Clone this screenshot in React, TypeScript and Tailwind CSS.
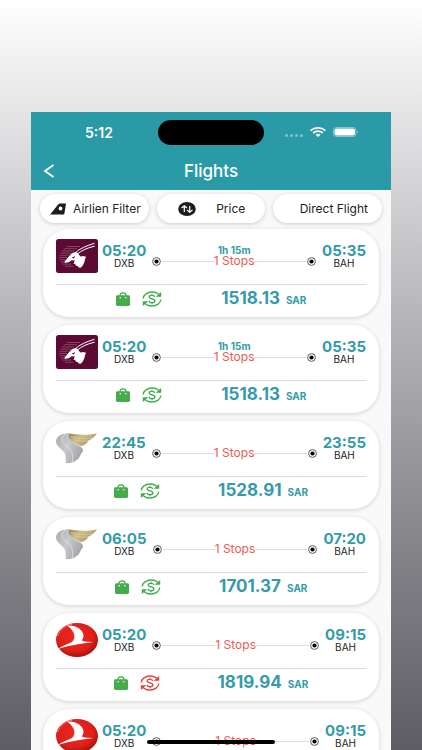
import { useState } from 'react';

type Airline = 'qatar' | 'gulf' | 'turkish';

interface Flight {
    id: number;
    airline: Airline;
    depart: string;
    arrive: string;
    duration?: string;
    price: string;
    refundable: boolean;
}

const flights: Flight[] = [
    { id: 1, airline: 'qatar', depart: '05:20', arrive: '05:35', duration: '1h 15m', price: '1518.13', refundable: true },
    { id: 2, airline: 'qatar', depart: '05:20', arrive: '05:35', duration: '1h 15m', price: '1518.13', refundable: true },
    { id: 3, airline: 'gulf', depart: '22:45', arrive: '23:55', price: '1528.91', refundable: true },
    { id: 4, airline: 'gulf', depart: '06:05', arrive: '07:20', price: '1701.37', refundable: true },
    { id: 5, airline: 'turkish', depart: '05:20', arrive: '09:15', price: '1819.94', refundable: false },
    { id: 6, airline: 'turkish', depart: '05:20', arrive: '09:15', price: '1819.94', refundable: false },
];

function QatarLogo() {
    return (
        <svg viewBox="0 0 42 34" className="h-[34px] w-[42px]" role="img" aria-label="Qatar Airways">
            <rect width="42" height="34" rx="2.5" fill="#5c0a33" />
            <path
                d="M11 7.500h13M8 9.700h13M6 11.900h12M4.500 14.100h11M3.500 16.300h9M3 18.500h8M3.500 20.700h6M4.500 22.900h5M6 25.100h9M9 27.300h8"
                stroke="#8f5473"
                strokeWidth="0.8"
            />
            <path d="M38.500 4.300C31 6.500 23.500 9.500 18.500 14.300M38.700 7.200C32 8.500 25.500 11.500 20.500 15.600" fill="none" stroke="#fff" strokeWidth="1" />
            <path
                d="M20 13.200c-3-.2-4.800 1.400-6.200 3.200-1.800 2.200-4 4.100-5.300 6.300-.3.700.6 1.400 1.400 1.100 2.300-.4 4-1 5.600-2.600l3.300.2-1.300 3.200 2 .6.300 1.500 2 .3.700 1.400 2.200.3 1.700-1.600 1.300-2.300.9-2.500.6-2.700 1-1.600-2.500-.9-2.600.4c-2-.4-2.600-3.800-5.100-4.300z"
                fill="#fff"
            />
            <path d="M15.600 18.700l3.600-1.800-1.400 2.600z" fill="#5c0a33" />
        </svg>
    );
}

function GulfLogo() {
    return (
        <svg viewBox="0 0 42 34" className="h-[34px] w-[42px]" role="img" aria-label="Gulf Air">
            <defs>
                <linearGradient id="gulf-gold" x1="0" y1="0" x2="1" y2="0.6">
                    <stop offset="0" stopColor="#8d7a4d" />
                    <stop offset="0.45" stopColor="#d0bd90" />
                    <stop offset="1" stopColor="#a8935f" />
                </linearGradient>
                <linearGradient id="gulf-silver" x1="0" y1="0" x2="1" y2="0.5">
                    <stop offset="0" stopColor="#a6a8ad" />
                    <stop offset="0.5" stopColor="#c9cace" />
                    <stop offset="1" stopColor="#a5a7ac" />
                </linearGradient>
            </defs>
            <path d="M11.500 2.300C20 3.600 31 4.600 41 2.200c-2 3.400-4.500 5.800-8.500 7.300-1.500 3.300-4 4.700-7.500 5.500L12.500 9z" fill="url(#gulf-gold)" />
            <path d="M15 5.500c7 2.300 16 3 23 .9M17 8.500c5 1.800 10 2.200 15 1.300" fill="none" stroke="#e8dcbb" strokeWidth="0.5" />
            <path
                d="M14 2.200C5.500 2 0 5.300 0 10.800c0 5.200 8 8 9.300 13.200.5 2.300.2 5 .7 8.200 7.500.2 12.500-3 14.500-8.200 1-2 3-3.200 2.500-5.500-.7-3.500-9.500-5.500-13-10-1.500-2-1.800-4.300 0-6.300z"
                fill="url(#gulf-silver)"
            />
            <path d="M10 3C5 5.500 4.500 9.500 9 13.500c5.500 4.500 8.500 7.500 7.500 17.500" fill="none" stroke="#ebecee" strokeWidth="0.7" />
        </svg>
    );
}

function TurkishLogo() {
    return (
        <svg viewBox="0 0 42 34" className="h-[34px] w-[42px]" role="img" aria-label="Turkish Airlines">
            <defs>
                <radialGradient id="thy-red" cx="0.45" cy="0.4" r="0.62">
                    <stop offset="0" stopColor="#ef2a1f" />
                    <stop offset="0.7" stopColor="#dd1f1a" />
                    <stop offset="1" stopColor="#a50f10" />
                </radialGradient>
            </defs>
            <ellipse cx="21" cy="17" rx="21" ry="17" fill="url(#thy-red)" />
            <path d="M1.500 13C4.500 6 10 2.300 16 1.200" fill="none" stroke="#f58a7e" strokeWidth="0.9" />
            <path
                d="M11 2.600C19 1.500 27.500 6.500 27.500 12.800c0 2.700-2 4.200-1.200 5 1.200 1.100 6.700 1 11.200 1.200C25 20.800 13 22.300 2.200 26c3.800-3.500 9-4.800 13-6.600C20.500 16.500 19.500 8 11 2.600z"
                fill="#fff"
            />
        </svg>
    );
}

function AirlineLogo({ airline }: { airline: Airline }) {
    if (airline === 'qatar') return <QatarLogo />;
    if (airline === 'gulf') return <GulfLogo />;
    return <TurkishLogo />;
}

function BagIcon() {
    return (
        <svg viewBox="0 0 14 14" className="size-[14px] text-[#43ad4b]" role="img" aria-label="Baggage included">
            <path d="M4 4.500V3.600C4 2 5.300.8 7 .8s3 1.200 3 2.800v.9" fill="none" stroke="currentColor" strokeWidth="1.300" />
            <rect y="3.300" width="14" height="10.700" rx="1.400" fill="currentColor" />
            <circle cx="4.200" cy="5.800" r="0.800" fill="#fff" />
            <circle cx="9.800" cy="5.800" r="0.800" fill="#fff" />
        </svg>
    );
}

function RefundIcon({ refundable }: { refundable: boolean }) {
    return (
        <svg
            viewBox="0 0 20 16"
            className={refundable ? 'h-4 w-5 text-[#43ad4b]' : 'h-4 w-5 text-[#e2453c]'}
            fill="none"
            stroke="currentColor"
            strokeWidth="1.3"
            role="img"
            aria-label={refundable ? 'Refundable' : 'Non refundable'}
        >
            <path d="M1.200 7.500C1.500 3.800 5.200 1 10 1c3.300 0 6.300 1.400 7.700 3.600M18.800 8.500C18.500 12.200 14.800 15 10 15c-3.300 0-6.300-1.400-7.700-3.600" />
            <path d="M19.200 1v4.800h-5.600zM.8 15v-4.800h5.600z" fill="currentColor" stroke="none" />
            <path d="M12.800 5.800c-.3-1-1.400-1.500-2.800-1.500-1.600 0-2.800.6-2.800 1.700 0 2.600 5.700 1.300 5.700 4 0 1.100-1.300 1.700-2.900 1.700-1.500 0-2.700-.6-3-1.700M10 2.800v1.500M10 11.700v1.500" />
        </svg>
    );
}

function Marker() {
    return (
        <svg viewBox="0 0 9 9" className="size-[9px] shrink-0" aria-hidden="true">
            <circle cx="4.500" cy="4.500" r="3.900" fill="#fff" stroke="#333" strokeWidth="0.800" />
            <circle cx="4.500" cy="4.500" r="2.100" fill="#000" />
        </svg>
    );
}

function Airport({ time, code }: { time: string; code: string }) {
    return (
        <div className="flex flex-col items-center">
            <span className="text-[15px] leading-[14px] font-bold text-[#359ba8]">{time}</span>
            <span className="text-[10px] leading-[10px] text-[#222]">{code}</span>
        </div>
    );
}

function FlightCard({ flight }: { flight: Flight }) {
    return (
        <li className="shrink-0 rounded-[26px] bg-white px-[13px] pt-[10px] pb-[5px] shadow-[0_1px_4px_rgba(0,0,0,0.16)]">
            <div className="flex h-[46px] items-start border-b border-[#dcdcdc]">
                <AirlineLogo airline={flight.airline} />
                <div className="flex flex-1 items-start justify-between pt-[5px] pl-1">
                    <Airport time={flight.depart} code="DXB" />
                    <div className="flex flex-1 flex-col px-[6px]">
                        <span className="h-3 text-center text-[10px] leading-3 font-bold text-[#359ba8]">
                            {flight.duration}
                        </span>
                        <div className="flex h-[10px] items-center">
                            <Marker />
                            <span className="ml-px h-px flex-1 bg-[#dcdcdc]" />
                            <span className="text-[12px] leading-[10px] text-[#ee5b52]">1 Stops</span>
                            <span className="mr-px h-px flex-1 bg-[#dcdcdc]" />
                            <Marker />
                        </div>
                    </div>
                    <Airport time={flight.arrive} code="BAH" />
                </div>
            </div>
            <div className="flex h-[27px] items-center justify-evenly">
                <div className="flex items-center gap-3">
                    <BagIcon />
                    <RefundIcon refundable={flight.refundable} />
                </div>
                <div className="flex items-baseline gap-[6px]">
                    <span className="text-[17px] leading-5 font-bold text-[#359ba8]">{flight.price}</span>
                    <span className="text-[10px] leading-5 font-bold text-[#359ba8]">SAR</span>
                </div>
            </div>
        </li>
    );
}

function StatusBar() {
    return (
        <div className="grid h-10 grid-cols-3 items-center text-white">
            <span className="pl-4 text-center text-[14px] font-semibold">5:12</span>
            <span className="h-[25px] w-[106px] justify-self-center rounded-full bg-black" />
            <div className="flex items-center justify-end gap-[7px] pr-8">
                <span className="flex gap-[2px] pt-[6px] opacity-40">
                    <span className="size-[3px] rounded-full bg-white" />
                    <span className="size-[3px] rounded-full bg-white" />
                    <span className="size-[3px] rounded-full bg-white" />
                    <span className="size-[3px] rounded-full bg-white" />
                </span>
                <svg viewBox="0 0 16 10" className="h-[10px] w-4" fill="none" stroke="#fff" strokeWidth="1.7" aria-hidden="true">
                    <path d="M.6 3.600C4.700 0 11.300 0 15.400 3.600M3.200 6C5.900 3.600 10.100 3.600 12.800 6" />
                    <path d="M5.500 7.700c1.400-1.300 3.600-1.300 5 0L8 9.900z" fill="#fff" stroke="none" />
                </svg>
                <svg viewBox="0 0 26 10" className="h-[10px] w-[26px]" aria-hidden="true">
                    <rect x="0.5" y="0.5" width="22.500" height="9" rx="3" fill="none" stroke="#fff" strokeOpacity="0.45" />
                    <rect x="1.500" y="1.500" width="20.500" height="7" rx="2.200" fill="#fff" />
                    <path d="M24.300 3.500c1.300.4 1.300 2.600 0 3z" fill="#fff" fillOpacity="0.5" />
                </svg>
            </div>
        </div>
    );
}

const filterClass =
    'flex h-[29px] items-center rounded-full bg-white text-[12px] whitespace-nowrap text-[#222] shadow-[0_1px_4px_rgba(0,0,0,0.18)]';

export default function App() {
    const [directOnly, setDirectOnly] = useState(false);

    return (
        <div className="flex h-screen flex-col overflow-hidden bg-linear-to-b from-white via-[#a9a8ad] to-[#5d5d63] px-[31px] pt-28 font-[Inter,sans-serif]">
            <main className="relative flex min-h-0 flex-1 flex-col bg-[#f9f9f9]">
                <header className="bg-[#2b9aa7]">
                    <StatusBar />
                    <div className="grid h-[38px] grid-cols-3 items-center px-3 text-white">
                        <button type="button" aria-label="Back" className="justify-self-start">
                            <svg viewBox="0 0 12 14" className="h-[14px] w-3" fill="none" stroke="currentColor" strokeWidth="1.800" aria-hidden="true">
                                <path d="M10.500 1L2 7l8.500 6" />
                            </svg>
                        </button>
                        <h1 className="text-center text-[17px] leading-6 font-medium">Flights</h1>
                    </div>
                </header>

                <div className="grid grid-cols-3 gap-2 px-[9px] pt-1">
                    <button type="button" className={`${filterClass} justify-between pr-2 pl-[10px]`}>
                        <svg viewBox="0 0 16 12" className="h-3 w-4" aria-hidden="true">
                            <path d="M.2 11.500L8.300 1.300C8.900.6 9.300.5 10 .5h5.200c.6 0 .8.4.7.9l-1.500 9.200c-.1.6-.5.9-1 .9z" fill="#1d1d1d" />
                            <circle cx="10.500" cy="5.500" r="1.900" fill="#fff" />
                        </svg>
                        Airlien Filter
                    </button>
                    <button type="button" className={`${filterClass} justify-between pr-5 pl-[21px]`}>
                        <svg viewBox="0 0 18 14" className="h-[14px] w-[18px]" aria-hidden="true">
                            <ellipse cx="9" cy="7" rx="8.800" ry="7" fill="#1d1d1d" />
                            <path d="M6.300 10V4M3.500 6l2.800-2.200L9 6M11.700 4v6M9 8l2.700 2.200L14.500 8" fill="none" stroke="#fff" strokeWidth="1.200" />
                        </svg>
                        Price
                    </button>
                    <button
                        type="button"
                        aria-pressed={directOnly}
                        onClick={() => setDirectOnly(!directOnly)}
                        className={`${filterClass} justify-end pr-[14px]`}
                    >
                        Direct Flight
                    </button>
                </div>

                <ul className="flex min-h-0 flex-1 flex-col gap-2 overflow-hidden px-3 pt-[6px]">
                    {flights.map((flight) => (
                        <FlightCard key={flight.id} flight={flight} />
                    ))}
                </ul>

                {/* Home indicator */}
                <div className="absolute inset-x-0 bottom-[6px] mx-auto h-1 w-32 rounded-full bg-black" />
            </main>
        </div>
    );
}
